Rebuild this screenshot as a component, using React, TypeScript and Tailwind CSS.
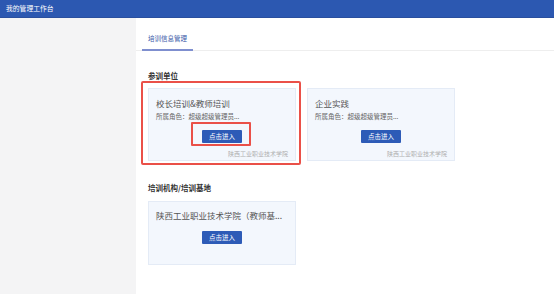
const cards = [
  { title: '校长培训&教师培训', role: '所属角色：超级超级管理员...', school: '陕西工业职业技术学院', marked: true },
  { title: '企业实践', role: '所属角色：超级超级管理员...', school: '陕西工业职业技术学院', marked: false },
];

function EnterButton({ marked }: { marked?: boolean }) {
  return (
    <div className="relative mx-auto w-[40px]">
      <button className="flex h-[13px] w-[40px] items-center justify-center rounded-[1px] bg-[#2d5bb7] text-[6.5px] leading-none text-white">
        点击进入
      </button>
      {marked && (
        <div className="pointer-events-none absolute -bottom-[3px] -left-[11px] -right-[9px] -top-[8px] rounded-[1px] border-2 border-[#ea5048]" />
      )}
    </div>
  );
}

function UnitCard({ title, role, school, marked }: (typeof cards)[number]) {
  return (
    <div className="relative">
      <div className="flex h-[73px] w-[148px] flex-col border border-[#e4ebf6] bg-[#f3f7fd] pt-[8px]">
        <div className="px-[7px] text-[8.5px] leading-[12px] text-[#555]">{title}</div>
        <div className="mt-[2.5px] px-[7px] text-[6.5px] leading-[9px] text-[#666]">{role}</div>
        <div className="mt-[9.5px]">
          <EnterButton marked={marked} />
        </div>
        <div className="mt-[7px] pr-[7px] text-right text-[6px] leading-[8px] text-[#b0b0b0]">{school}</div>
      </div>
      {marked && (
        <div className="pointer-events-none absolute -bottom-[4px] -left-[7px] -right-[5px] -top-[7px] rounded-[2px] border-2 border-[#ea5048]" />
      )}
    </div>
  );
}

export default function App() {
  return (
    <div className="h-[294px] w-[554px] overflow-hidden bg-[#f4f4f5] font-['Noto_Sans_CJK_SC','Noto_Sans',sans-serif]">
      <header className="flex h-[18px] items-center border-b border-[#2a4f9e] bg-[#2c58b1] px-[6px] text-[6.8px] text-white">
        我的管理工作台
      </header>
      <div className="flex h-[276px]">
        <aside className="w-[136px] bg-[#f4f4f5]" />
        <main className="flex-1 bg-white">
          <div className="flex h-[33px] items-end border-b border-[#eeeeee] pl-[6px]">
            <div className="-mb-px w-[51px] border-b-2 border-[#7f8fcf] pb-[6px] text-center text-[6.5px] leading-[10px] text-[#3a5aa8]">
              培训信息管理
            </div>
          </div>
          <div className="pl-[12px]">
            <div className="mt-[20px] text-[7.5px] font-semibold leading-[10px] text-[#333]">参训单位</div>
            <div className="mt-[7px] flex gap-[11px]">
              {cards.map((c) => (
                <UnitCard key={c.title} {...c} />
              ))}
            </div>
            <div className="mt-[22px] text-[7.5px] font-semibold leading-[10px] text-[#333]">培训机构/培训基地</div>
            <div className="mt-[8px] flex h-[64px] w-[148px] flex-col border border-[#e4ebf6] bg-[#f3f7fd] pt-[7px]">
              <div className="px-[7px] text-[8.5px] leading-[12px] text-[#555]">陕西工业职业技术学院（教师基...</div>
              <div className="mt-[10px]">
                <EnterButton />
              </div>
            </div>
          </div>
        </main>
      </div>
    </div>
  );
}
